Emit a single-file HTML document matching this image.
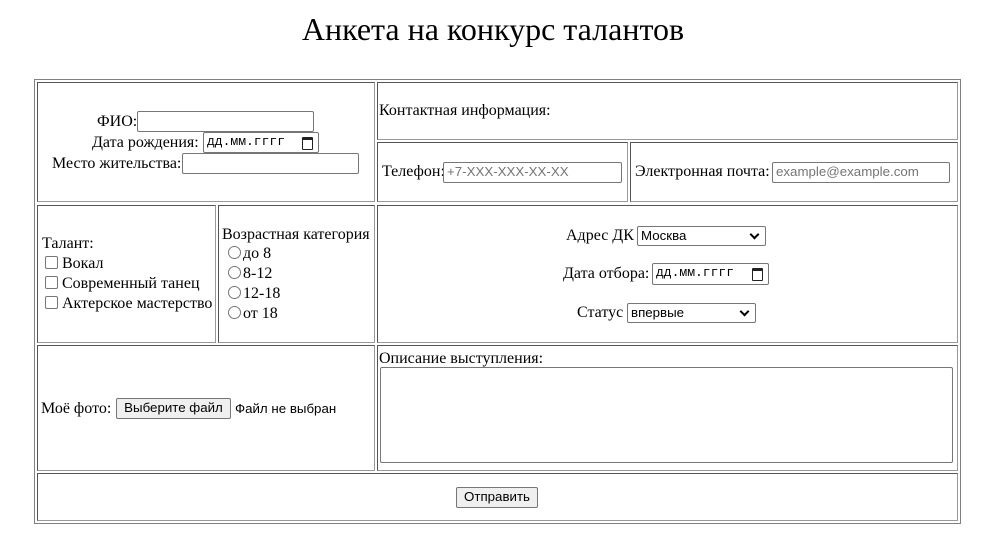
<!DOCTYPE html>
<html><head><meta charset="utf-8"><style>
body{margin:0;width:986px;height:539px;background:#fff;position:relative;font-family:"Liberation Serif",serif;font-size:16px;color:#000;overflow:hidden}
.a{position:absolute;white-space:nowrap;line-height:18px}
.b{position:absolute;box-sizing:border-box;border:1px solid #808080}
.c{position:absolute;box-sizing:border-box;border:1px solid #555;border-right-color:#999;border-bottom-color:#999}
.in{position:absolute;box-sizing:border-box;border:1px solid #767676;border-radius:2px;background:#fff;font-family:"Liberation Sans",sans-serif;font-size:13.3px;line-height:18px;padding-left:3px;white-space:nowrap}
.ph{color:#757575}
.mono{font-family:"Liberation Mono",monospace;font-size:13px}
.cal{position:absolute;right:5px;top:4px;width:9px;height:9px;border:1.5px solid #222;border-top-width:3px;border-radius:1px}
.sel:after{content:"";position:absolute;right:7px;top:4px;width:5px;height:5px;border-right:2px solid #000;border-bottom:2px solid #000;transform:rotate(45deg)}
.btn{position:absolute;box-sizing:border-box;border:1px solid #767676;border-radius:2px;background:#efefef;font-family:"Liberation Sans",sans-serif;font-size:13.3px;text-align:center;line-height:18px}
.cb{position:absolute;width:11px;height:11px;border:1px solid #767676;border-radius:2px;background:#fff}
.rb{position:absolute;width:11px;height:11px;border:1px solid #767676;border-radius:50%;background:#fff}
</style></head><body>
<div class="a" style="left:0;width:986px;text-align:center;top:10px;font-size:32px;line-height:38px">Анкета на конкурс талантов</div>
<div class="b" style="left:34px;top:79px;width:927px;height:445px"></div>
<div class="c" style="left:37px;top:82px;width:338px;height:120px"></div>
<div class="c" style="left:377px;top:82px;width:581px;height:58px"></div>
<div class="c" style="left:377px;top:142px;width:251px;height:60px"></div>
<div class="c" style="left:630px;top:142px;width:328px;height:60px"></div>
<div class="c" style="left:37px;top:205px;width:179px;height:138px"></div>
<div class="c" style="left:218px;top:205px;width:157px;height:138px"></div>
<div class="c" style="left:377px;top:205px;width:581px;height:138px"></div>
<div class="c" style="left:37px;top:345px;width:338px;height:126px"></div>
<div class="c" style="left:377px;top:345px;width:581px;height:126px"></div>
<div class="c" style="left:37px;top:473px;width:921px;height:48px"></div>

<div class="a" style="left:97px;top:113px">ФИО:</div>
<div class="in" style="left:137px;top:111px;width:177px;height:21px"></div>
<div class="a" style="left:92px;top:134px">Дата рождения:</div>
<div class="in mono" style="left:203px;top:132px;width:116px;height:21px">дд.мм.гггг<span class="cal"></span></div>
<div class="a" style="left:52px;top:155px">Место жительства:</div>
<div class="in" style="left:182px;top:153px;width:177px;height:21px"></div>

<div class="a" style="left:379px;top:102px">Контактная информация:</div>
<div class="a" style="left:382px;top:163px">Телефон:</div>
<div class="in ph" style="left:443px;top:162px;width:179px;height:21px">+7-XXX-XXX-XX-XX</div>
<div class="a" style="left:635px;top:163px">Электронная почта:</div>
<div class="in ph" style="left:772px;top:162px;width:178px;height:21px">example@example.com</div>

<div class="a" style="left:42px;top:235px">Талант:</div>
<div class="cb" style="left:45px;top:256px"></div><div class="a" style="left:62px;top:255px">Вокал</div>
<div class="cb" style="left:45px;top:276px"></div><div class="a" style="left:62px;top:275px">Современный танец</div>
<div class="cb" style="left:45px;top:296px"></div><div class="a" style="left:62px;top:295px">Актерское мастерство</div>

<div class="a" style="left:222px;top:226px">Возрастная категория</div>
<div class="rb" style="left:228px;top:246px"></div><div class="a" style="left:243px;top:245px">до 8</div>
<div class="rb" style="left:228px;top:266px"></div><div class="a" style="left:243px;top:265px">8-12</div>
<div class="rb" style="left:228px;top:286px"></div><div class="a" style="left:243px;top:285px">12-18</div>
<div class="rb" style="left:228px;top:306px"></div><div class="a" style="left:243px;top:305px">от 18</div>

<div class="a" style="left:566px;top:227px">Адрес ДК</div>
<div class="in sel" style="left:637px;top:226px;width:129px;height:20px">Москва</div>
<div class="a" style="left:563px;top:265px">Дата отбора:</div>
<div class="in mono" style="left:652px;top:263px;width:117px;height:22px">дд.мм.гггг<span class="cal"></span></div>
<div class="a" style="left:577px;top:304px">Статус</div>
<div class="in sel" style="left:627px;top:303px;width:129px;height:20px">впервые</div>

<div class="a" style="left:41px;top:400px">Моё фото:</div>
<div class="btn" style="left:116px;top:398px;width:115px;height:21px">Выберите файл</div>
<div class="a" style="left:235px;top:400px;font-family:'Liberation Sans',sans-serif;font-size:13.3px">Файл не выбран</div>

<div class="a" style="left:379px;top:350px">Описание выступления:</div>
<div class="in" style="left:380px;top:367px;width:573px;height:96px"></div>

<div class="btn" style="left:456px;top:487px;width:82px;height:21px">Отправить</div>
</body></html>
